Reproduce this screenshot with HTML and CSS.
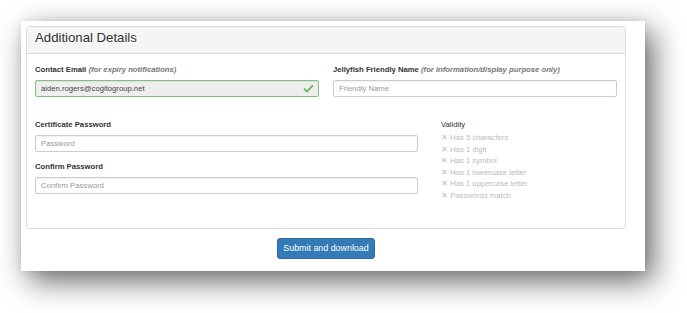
FILE: index.html
```html
<!DOCTYPE html>
<html>
<head>
<meta charset="utf-8">
<link rel="stylesheet" href="styles.css">
</head>
<body>
<div class="page">
  <div class="card">
    <div class="panel">
      <div class="panel-heading"><h3 class="panel-title">Additional Details</h3></div>
      <div class="panel-body">
        <div class="row row-top">
          <div class="field">
            <label class="label">Contact Email <i class="hint">(for expiry notifications)</i></label>
            <div class="input input-success">
              <span class="value">aiden.rogers@cogitogroup.net</span>
              <svg class="check" viewBox="0 0 12 10" width="11" height="9"><path d="M1 5.2 L4.3 8.3 L11 1.5" fill="none" stroke="#5cb85c" stroke-width="2"/></svg>
            </div>
          </div>
          <div class="field">
            <label class="label">Jellyfish Friendly Name <i class="hint">(for information/display purpose only)</i></label>
            <div class="input"><span class="placeholder">Friendly Name</span></div>
          </div>
        </div>
        <div class="row row-pw">
          <div class="pw-col">
            <div class="field">
              <label class="label">Certificate Password</label>
              <div class="input"><span class="placeholder">Password</span></div>
            </div>
            <div class="field field-confirm">
              <label class="label">Confirm Password</label>
              <div class="input"><span class="placeholder">Confirm Password</span></div>
            </div>
          </div>
          <div class="validity">
            <div class="validity-title">Validity</div>
            <ul class="rules">
              <li>✕ Has 5 characters</li>
              <li>✕ Has 1 digit</li>
              <li>✕ Has 1 symbol</li>
              <li>✕ Has 1 lowercase letter</li>
              <li>✕ Has 1 uppercase letter</li>
              <li>✕ Passwords match</li>
            </ul>
          </div>
        </div>
      </div>
    </div>
    <div class="actions">
      <button class="btn">Submit and download</button>
    </div>
  </div>
</div>
</body>
</html>
```

FILE: styles.css
```css
* { box-sizing: border-box; }
html, body { margin: 0; padding: 0; background: #fff; }
body {
  font-family: "Liberation Sans", Arial, sans-serif;
  font-size: 7.7px;
  color: #333;
  min-height: 313px;
}
.page { padding: 21px 0 42px 21px; }
.card {
  width: 624px;
  height: 250px;
  background: #fff;
  padding: 5px 19px 0 5px;
  box-shadow: 8px 10px 28px rgba(0,0,0,0.6), 0 0 8px rgba(0,0,0,0.08);
}
.panel {
  border: 1px solid #ddd;
  border-radius: 3px;
  height: 203px;
}
.panel-heading {
  height: 27px;
  background: #f5f5f5;
  border-bottom: 1px solid #ddd;
  padding: 0 8px 5px 8px;
  display: flex;
  align-items: center;
}
.panel-title {
  margin: 0;
  font-weight: normal;
  font-size: 13.2px;
  color: #333;
  line-height: 1;
}
.panel-body { padding: 10px 8px 0 8px; }
.row { display: flex; }
.row-top { gap: 14px; }
.row-top .field { width: 284px; }
.row-pw { margin-top: 22px; gap: 23px; }
.pw-col { width: 383px; }
.field-confirm { margin-top: 9px; }
.label {
  display: block;
  font-weight: bold;
  line-height: 11px;
  height: 11px;
  margin-bottom: 5px;
  color: #333;
}
.hint { font-weight: bold; color: #777; }
.input {
  height: 17px;
  border: 1px solid #ccc;
  border-radius: 2px;
  box-shadow: inset 0 1px 1px rgba(0,0,0,0.06);
  padding: 0 5px;
  display: flex;
  align-items: center;
  justify-content: space-between;
  background: #fff;
}
.input-success {
  background: #eee;
  border-color: #7cc47c;
}
.value { color: #444; }
.placeholder { color: #999; }
.check { margin-right: -1px; }
.validity-title { line-height: 11px; color: #333; margin-bottom: 2px; }
.rules { list-style: none; margin: 0; padding: 0; color: #bbb; }
.rules li { line-height: 11.6px; }
.actions {
  width: 600px;
  display: flex;
  justify-content: center;
  padding-top: 9px;
}
.btn {
  font-family: "Liberation Sans", Arial, sans-serif;
  font-size: 8.9px;
  color: #fff;
  background: #337ab7;
  border: 1px solid #2e6da4;
  border-radius: 3px;
  height: 21px;
  width: 98px;
  padding: 0;
  line-height: 1;
}
```
